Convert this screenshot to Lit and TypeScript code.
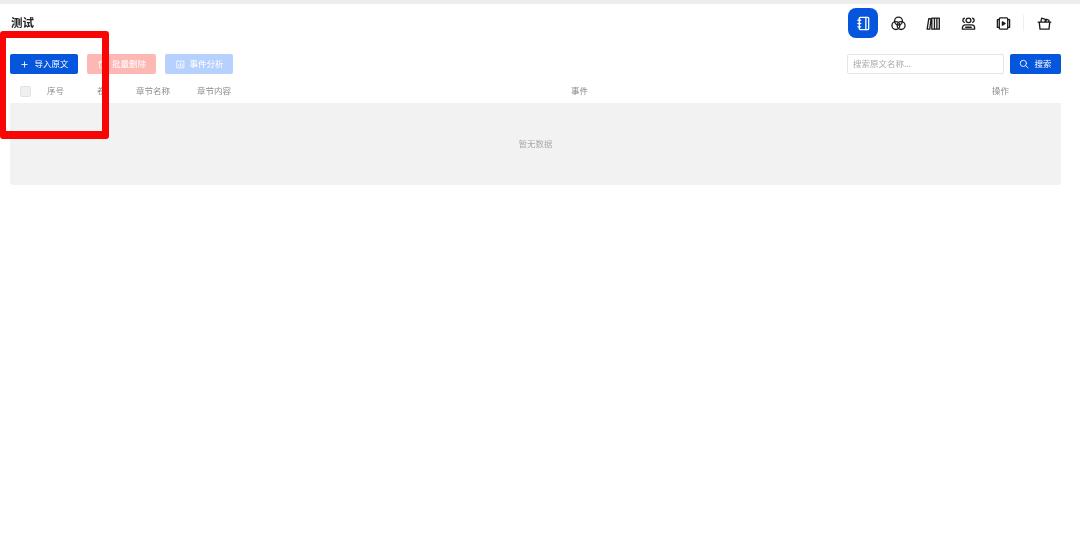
import { LitElement, html, css, svg } from "lit";
import { customElement } from "lit/decorators.js";

const ic = (body: unknown, cls = "nav-svg") => html`<svg class=${cls} viewBox="0 0 16 16" fill="none" stroke="currentColor" stroke-width="1.4" stroke-linecap="round" stroke-linejoin="round">${body}</svg>`;

const navIcons = [
  svg`<rect x="3.5" y="1.5" width="10" height="13" rx="1"/><path d="M10.5 1.5v13M2 4.5h3M2 8h3M2 11.5h3"/>`,
  svg`<circle cx="8" cy="5.4" r="4.2"/><circle cx="5.2" cy="10.2" r="4.2"/><circle cx="10.8" cy="10.2" r="4.2"/>`,
  svg`<path d="M1.2 14 3 2.8l2.4.4L4 14zM6.2 2.2h8v11.8h-8zM9 2.2V14M11.6 2.2V14"/>`,
  svg`<ellipse cx="8" cy="4.6" rx="2.6" ry="2.4"/><path d="M3.6 2.4a2.3 2.3 0 0 0 0 4.4M12.4 2.4a2.3 2.3 0 0 1 0 4.4M1.5 14v-1.4a3.2 3.2 0 0 1 3.2-3.2h6.6a3.2 3.2 0 0 1 3.2 3.2V14zM5 12h6"/>`,
  svg`<rect x="3.5" y="2" width="9" height="12" rx="1"/><path d="M3.5 3.8H1.5v8.4h2M12.5 3.8h2v8.4h-2"/><path d="M6.8 6.2 9.8 8l-3 1.8z" fill="currentColor"/>`,
  svg`<path d="M2.4 6.5h11.2l-.8 7.5H3.2zM4 6.5 5 2.2l4 1.4-.6 2.9M9 6.5l1.4-3 2.4 1.2-.6 1.8M1.2 6.5h13.6"/>`,
];

const columns = [
  ["序号", "c-no"],
  ["卷", "c-vol"],
  ["章节名称", "c-name"],
  ["章节内容", "c-body"],
  ["事件", "c-event"],
  ["操作", "c-op"],
];

@customElement("app-root")
export class AppRoot extends LitElement {
  static styles = css`
    :host {
      display: block;
      position: relative;
      width: 1080px;
      height: 536px;
      overflow: hidden;
      background: #fff;
      font-family: "Noto Sans CJK SC", "Liberation Sans", sans-serif;
    }
    .page { filter: blur(0.4px); height: 100%; }
    .topline { height: 4px; background: #ececec; }
    .header {
      height: 38px;
      padding: 0 10px 0 11px;
      display: flex;
      align-items: center;
      justify-content: space-between;
      box-sizing: border-box;
    }
    .title { font-size: 11.5px; font-weight: 700; color: #222; padding-bottom: 3px; }
    .nav { display: flex; align-items: center; gap: 5px; margin-right: 11px; }
    .nav-btn {
      width: 30px;
      height: 30px;
      border-radius: 8px;
      display: flex;
      align-items: center;
      justify-content: center;
      color: #1c1c1c;
    }
    .nav-btn.active { background: #0556dc; color: #fff; }
    .nav-svg { width: 15px; height: 15px; }
    .divider { width: 1px; height: 16px; background: #eee; }
    .toolbar {
      display: flex;
      justify-content: space-between;
      padding: 12px 19px 0 10px;
      height: 28px;
    }
    .group { display: flex; gap: 9px; height: 20px; }
    .btn {
      height: 20px;
      border-radius: 2px;
      display: flex;
      align-items: center;
      justify-content: center;
      gap: 6px;
      font-size: 8.5px;
      color: #fff;
      box-sizing: border-box;
      padding-bottom: 2px;
    }
    .btn-svg { width: 9px; height: 9px; margin-top: 2px; }
    .plus { width: 7px; height: 7px; stroke-width: 2; margin-left: 1.5px; margin-right: 0.5px; }
    .shift { margin-left: 1.5px; margin-right: -1.5px; }
    .search { width: 10px; height: 10px; margin-right: -1px; }
    .primary { background: #0556dc; }
    .danger { background: #fdb8b4; }
    .info { background: #b6d1fd; }
    .w-import { width: 68px; }
    .w-del { width: 69px; }
    .w-event { width: 68px; }
    .w-search { width: 51px; }
    .input {
      width: 157px;
      height: 20px;
      box-sizing: border-box;
      border: 1px solid #e4e4e4;
      border-radius: 2px;
      font-size: 8.5px;
      color: #aaa;
      display: flex;
      align-items: center;
      padding: 0 0 2px 5px;
    }
    .search-group { gap: 6px; }
    .thead {
      margin: 0 19px 0 10px;
      height: 21px;
      box-sizing: border-box;
      padding-bottom: 6px;
      display: flex;
      align-items: center;
      font-size: 8.5px;
      color: #8c8c8c;
    }
    .check {
      width: 11px;
      height: 11px;
      margin: 3px 16px 0 10px;
      border-radius: 2px;
      border: 1px solid #e2e2e2;
      background: #f0f0f0;
      box-sizing: border-box;
      flex: none;
    }
    .c-no { width: 50px; }
    .c-vol { width: 39px; }
    .c-name { width: 61px; }
    .c-body { width: 374px; }
    .c-event { width: 421px; }
    .c-op { width: 20px; }
    .empty {
      margin: 0 19px 0 10px;
      height: 82px;
      box-sizing: border-box;
      padding-bottom: 2px;
      background: #f2f2f2;
      border-radius: 0 0 3px 3px;
      display: flex;
      align-items: center;
      justify-content: center;
      font-size: 8.5px;
      color: #aaa;
    }
    .mark {
      position: absolute;
      left: 0;
      top: 31px;
      width: 109px;
      height: 108px;
      box-sizing: border-box;
      border: solid #fa0505;
      border-width: 7px 7px 8px 6px;
      border-radius: 3px;
    }
  `;

  render() {
    return html`
      <div class="page">
        <div class="topline"></div>
        <div class="header">
          <div class="title">测试</div>
          <div class="nav">
            ${navIcons.map((n, i) => html`
              ${i === 5 ? html`<div class="divider"></div>` : ""}
              <div class="nav-btn ${i === 0 ? "active" : ""}">${ic(n)}</div>
            `)}
          </div>
        </div>
        <div class="toolbar">
          <div class="group">
            <div class="btn primary w-import">${ic(svg`<path d="M8 2v12M2 8h12"/>`, "btn-svg plus")}导入原文</div>
            <div class="btn danger w-del">${ic(svg`<path d="M3 4h10M6 4V2h4v2M4 4l1 10h6l1-10"/>`, "btn-svg")}批量删除</div>
            <div class="btn info w-event">${ic(svg`<rect x="2" y="2" width="12" height="12"/><path d="M5 11V8M8 11V5M11 11V7"/>`, "btn-svg shift")}事件分析</div>
          </div>
          <div class="group search-group">
            <div class="input">搜索原文名称...</div>
            <div class="btn primary w-search">${ic(svg`<circle cx="7" cy="7" r="5"/><path d="m11 11 3.5 3.5"/>`, "btn-svg search")}搜索</div>
          </div>
        </div>
        <div class="thead">
          <div class="check"></div>
          ${columns.map(([t, c]) => html`<div class=${c}>${t}</div>`)}
        </div>
        <div class="empty">暂无数据</div>
      </div>
      <div class="mark"></div>
    `;
  }
}
